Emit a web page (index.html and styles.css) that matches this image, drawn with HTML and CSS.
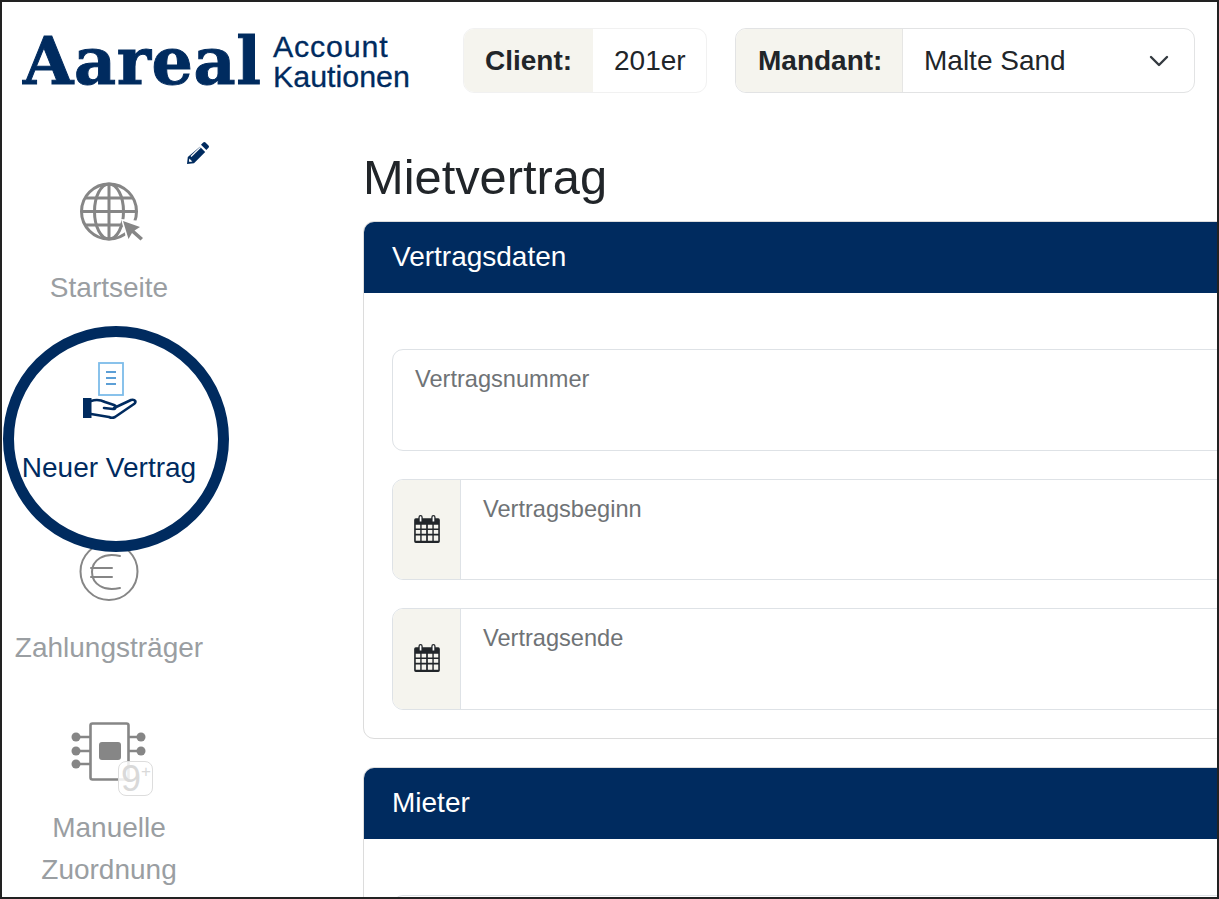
FILE: index.html
```html
<!DOCTYPE html>
<html lang="de">
<head>
<meta charset="utf-8">
<title>Mietvertrag</title>
<link rel="stylesheet" href="styles.css">
</head>
<body>
<div class="frame">
  <header class="topbar">
    <div class="logo">
      <span class="logo-mark">Aareal</span>
      <span class="logo-sub"><span class="logo-line-a">Account</span><span>Kautionen</span></span>
    </div>
    <div class="group group-client">
      <span class="addon addon-client">Client:</span>
      <span class="value">201er</span>
    </div>
    <div class="group group-mandant">
      <span class="addon addon-mandant">Mandant:</span>
      <span class="value value-select">Malte Sand
        <svg class="chevron" viewBox="0 0 20 12" width="20" height="12"><path d="M2 2l8 8 8-8" fill="none" stroke="#343a40" stroke-width="2.4" stroke-linecap="round" stroke-linejoin="round"/></svg>
      </span>
    </div>
  </header>
  <div class="layout">
    <nav class="sidebar">
      <svg class="pencil" viewBox="0 0 24 24" width="24" height="24"><path fill="#002b5f" d="M17.2 1.5a1.6 1.6 0 0 1 2.3 0l3 3a1.6 1.6 0 0 1 0 2.3l-2.2 2.2-5.3-5.3zM13.9 5.700l5.300 5.300L8 22.200 1 23l.8-7z"/><path fill="#fff" d="M3.300 17.600l3 3-2.600.4-.8-.8z"/><path d="M5 15.500l9.500-9.300" stroke="#fff" stroke-width="1.200"/></svg>
      <a class="nav-item">
        <svg class="nav-icon" viewBox="0 0 64 64" width="64" height="64">
          <g fill="none" stroke="#868686" stroke-width="3">
            <circle cx="32" cy="32.500" r="27.500"/>
            <ellipse cx="32" cy="32.500" rx="14.500" ry="27.500"/>
            <path d="M32 5v55M5 32.500h55M9 19h46M9 46h46"/>
          </g>
          <path fill="#fff" d="M44 40l20 2v20l-14 0z"/>
          <path fill="#868686" d="M46 42l17 6-5.500 3.500 8.500 7.500-2.500 2.500-8.500-7.500-3.500 6z"/>
        </svg>
        <span class="nav-label">Startseite</span>
      </a>
      <a class="nav-item active">
        <svg class="nav-icon" viewBox="0 0 64 64" width="64" height="64">
          <rect x="22" y="4" width="24" height="32" fill="#fff" stroke="#7dbce9" stroke-width="1.800"/>
          <path d="M29 13h10M29 19h10M29 25h10" stroke="#5c9fd6" stroke-width="2"/>
          <path fill="#002b5f" d="M6 39h8.500v20H6z"/>
          <path fill="none" stroke="#002b5f" stroke-width="2.600" stroke-linejoin="round" stroke-linecap="round" d="M14 42c6-2 10-1 14 1l9 3c3 1 2 4-1 4l-9-1m10 0l17-8c4-1 6 2 3 4L38 58c-2 1-4 1-6 0l-18-3"/>
        </svg>
        <span class="nav-label">Neuer Vertrag</span>
      </a>
      <a class="nav-item">
        <svg class="nav-icon" viewBox="0 0 64 64" width="64" height="64">
          <circle cx="32" cy="32.500" r="28.500" fill="none" stroke="#868686" stroke-width="2"/>
          <path fill="none" stroke="#868686" stroke-width="2" stroke-linecap="round" d="M43 17C27 13 15 21 15 33s12 20 28 16M14 29h21M14 38h21"/>
        </svg>
        <span class="nav-label">Zahlungsträger</span>
      </a>
      <a class="nav-item">
        <svg class="nav-icon" viewBox="-2 -2 84 72" width="84" height="72">
          <rect x="21.500" y="2.500" width="38" height="56" rx="2" fill="none" stroke="#868686" stroke-width="2.600"/>
          <rect x="30" y="21" width="22" height="18" rx="3" fill="#868686"/>
          <path d="M7 16h14M7 30h14M7 43h14M60 16h13M60 30h13" stroke="#868686" stroke-width="2.600"/>
          <g fill="#868686"><circle cx="7" cy="16" r="4.500"/><circle cx="7" cy="30" r="4.500"/><circle cx="7" cy="43" r="4.500"/><circle cx="72" cy="16" r="4.500"/><circle cx="72" cy="30" r="4.500"/></g>
        </svg>
        <span class="badge"><span class="badge-num">9</span><span class="badge-plus">+</span></span>
        <span class="nav-label">Manuelle Zuordnung</span>
      </a>
      <span class="active-ring"></span>
    </nav>
    <main class="content">
      <h1 class="title">Mietvertrag</h1>
      <section class="card">
        <h2 class="card-head">Vertragsdaten</h2>
        <div class="card-body">
          <div class="field"><span class="field-label">Vertragsnummer</span></div>
          <div class="field">
            <span class="field-addon"><svg viewBox="0 0 26 28" width="28" height="30"><use href="#cal"/></svg></span>
            <span class="field-label">Vertragsbeginn</span>
          </div>
          <div class="field">
            <span class="field-addon"><svg viewBox="0 0 26 28" width="28" height="30"><use href="#cal"/></svg></span>
            <span class="field-label">Vertragsende</span>
          </div>
        </div>
      </section>
      <section class="card">
        <h2 class="card-head">Mieter</h2>
        <div class="card-body">
          <div class="field"></div>
        </div>
      </section>
    </main>
  </div>
</div>
<svg class="defs" width="0" height="0">
  <defs>
    <g id="cal">
      <path fill="#212529" d="M1 5.500a1.500 1.500 0 0 1 1.500-1.500H5V3a2 2 0 0 1 4 0v1h8V3a2 2 0 0 1 4 0v1h2.500A1.500 1.500 0 0 1 25 5.500v20a1.500 1.500 0 0 1-1.500 1.500h-21A1.500 1.500 0 0 1 1 25.500z"/>
      <path fill="#fff" d="M6.200 2.800a.8.8 0 0 1 1.600 0V7H6.200zM18.200 2.800a.8.8 0 0 1 1.600 0V7h-1.600z"/>
      <g fill="#f5f4ee">
        <path d="M2.500 10h4.200v3.500H2.500zM8 10h4.200v3.500H8zM13.800 10H18v3.500h-4.200zM19.300 10h4.200v3.500h-4.200z"/>
        <path d="M2.500 15h4.200v3.500H2.500zM8 15h4.200v3.500H8zM13.800 15H18v3.500h-4.200zM19.300 15h4.200v3.500h-4.200z"/>
        <path d="M2.500 20h4.200v5H2.500zM8 20h4.200v5H8zM13.800 20H18v5h-4.200zM19.300 20h4.200v5h-4.200z"/>
      </g>
    </g>
  </defs>
</svg>
</body>
</html>
```
FILE: styles.css
```css
* { box-sizing: border-box; }
html, body { margin: 0; padding: 0; background: #fff; }
body { font-family: "Liberation Sans", Arial, sans-serif; color: #212529; font-size: 28px; }
.frame { width: 1219px; height: 899px; border: 2px solid #222; overflow: hidden; background: #fff; }

.topbar { display: flex; align-items: flex-start; height: 128px; padding: 26px 0 0 21px; }
.logo { display: flex; align-items: center; width: 440px; flex: none; height: 66px; color: #002b5f; }
.logo-mark { font-family: "DejaVu Serif", serif; font-weight: 700; font-size: 65px; line-height: 70px; letter-spacing: .6px; width: 250px; -webkit-text-stroke: 1px #002b5f; }
.logo-sub { display: flex; flex-direction: column; font-size: 30.4px; line-height: 30px; -webkit-text-stroke: .3px #002b5f; }
.logo-line-a { letter-spacing: .8px; }

.group { display: flex; height: 65px; border: 1px solid #e2e3e4; border-radius: 11px; overflow: hidden; flex: none; }
.group-client { width: 244px; margin-right: 28px; border-color: #f1f1f1; }
.group-mandant { width: 460px; }
.addon { display: flex; align-items: center; padding-left: 21px; background: #f5f4ee; font-weight: 700; border-right: 1px solid #e6e6e4; flex: none; }
.addon-client { width: 129px; border-right: 0; }
.addon-mandant { width: 167px; padding-left: 22px; }
.value { display: flex; align-items: center; padding-left: 21px; flex: 1; }
.value-select { justify-content: space-between; padding-right: 25px; }
.chevron { display: block; }

.layout { display: grid; grid-template-columns: 214px 1000px; column-gap: 148px; }

.sidebar { position: relative; display: flex; flex-direction: column; }
.nav-item { position: relative; display: flex; flex-direction: column; align-items: center; height: 180px; padding-top: 49px; color: #9a9ea2; text-align: center; }
.nav-icon { display: block; flex: none; margin-bottom: 24px; overflow: visible; }
.nav-label { display: block; line-height: 42px; width: 150px; white-space: normal; }
.nav-item:nth-child(3) .nav-label, .nav-item:nth-child(4) .nav-label { width: 214px; }
.nav-item.active { color: #002b5f; }
.nav-item:nth-child(5) .nav-label { width: 160px; }
.nav-item:nth-child(5) .nav-icon { margin-bottom: 16px; }
.pencil { position: absolute; left: 184px; top: 11px; }
.active-ring { position: absolute; left: 1px; top: 196px; width: 226px; height: 226px; border: 11px solid #002b5f; border-radius: 50%; pointer-events: none; }
.badge { position: absolute; left: 116px; top: 91px; width: 35px; height: 35px; border: 1px solid #ddd; border-radius: 8px; background: rgba(255,255,255,.85); color: #d9d9d9; display: flex; line-height: 33px; padding-left: 2px; }
.badge-num { font-size: 36px; }
.badge-plus { font-size: 17px; line-height: 20px; }

.content { min-width: 0; padding-top: 18px; margin-left: -1px; }
.title { margin: 0 0 15px; font-size: 48.8px; font-weight: 400; line-height: 58px; }
.card { border: 1px solid #dcdcdc; border-radius: 11px; overflow: hidden; margin-bottom: 28px; }
.card-head { margin: -1px -1px 0; height: 72px; padding: 0 29px; background: #002b5f; color: #fff; font-size: 28px; font-weight: 400; line-height: 71px; }
.card-body { padding: 56px 27px 28px 28px; display: flex; flex-direction: column; gap: 28px; }
.field { display: flex; height: 101.5px; border: 1px solid #dee2e6; border-radius: 11px; overflow: hidden; background: #fff; }
.field-label { padding: 15px 0 0 22px; font-size: 23.6px; line-height: 28px; color: #6f7376; }
.field-addon { display: flex; align-items: center; justify-content: center; width: 68px; flex: none; background: #f5f4ee; border-right: 1px solid #dee2e6; }
.field-addon svg { display: block; margin-top: -1px; }
.defs { position: absolute; }
```
